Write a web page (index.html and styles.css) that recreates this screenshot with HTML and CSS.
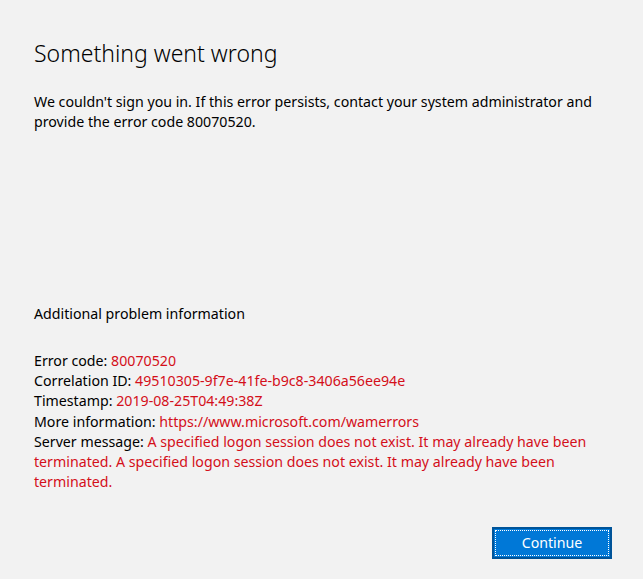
FILE: index.html
```html
<!DOCTYPE html>
<html>
<head>
<meta charset="utf-8">
<link rel="stylesheet" href="styles.css">
</head>
<body>
<div class="page">
  <h1 class="title">Something went wrong</h1>
  <p class="desc">We couldn't sign you in. If this error persists, contact your system administrator and provide the error code 80070520.</p>
  <div class="info">
    <p class="info-head">Additional problem information</p>
    <div class="details">
      <div>Error code: <span class="err">80070520</span></div>
      <div>Correlation ID: <span class="err">49510305-9f7e-41fe-b9c8-3406a56ee94e</span></div>
      <div>Timestamp: <span class="err">2019-08-25T04:49:38Z</span></div>
      <div>More information: <span class="err">https://www.microsoft.com/wamerrors</span></div>
      <div>Server message: <span class="err">A specified logon session does not exist. It may already have been terminated. A specified logon session does not exist. It may already have been terminated.</span></div>
    </div>
  </div>
  <div class="actions">
    <button class="btn"><span class="focus">Continue</span></button>
  </div>
</div>
</body>
</html>
```
FILE: styles.css
```css
html, body {
  margin: 0;
  padding: 0;
  background: #f2f2f2;
}
body {
  font-family: "Noto Sans", "Open Sans", sans-serif;
  color: #000;
  width: 643px;
  height: 579px;
  overflow: hidden;
}
.page {
  box-sizing: border-box;
  height: 579px;
  padding: 36px 31px 0 34px;
  display: flex;
  flex-direction: column;
}
.title {
  margin: 0;
  font-weight: 300;
  font-size: 23px;
  line-height: 34px;
}
.desc {
  margin: 22px 0 0 0;
  font-size: 14.2px;
  line-height: 20px;
}
.info {
  margin-top: 172px;
}
.info-head {
  margin: 0;
  font-size: 14.2px;
  line-height: 20px;
}
.details {
  margin-top: 27px;
  font-size: 14.2px;
  line-height: 20.17px;
}
.err {
  color: #d40f1a;
}
.actions {
  margin-top: auto;
  margin-bottom: 20px;
  display: flex;
  justify-content: flex-end;
}
.btn {
  width: 120px;
  height: 32px;
  padding: 1px;
  background: #0078d7;
  border: 2px solid #005499;
  color: #fff;
  font-family: inherit;
  font-size: 14.2px;
  display: flex;
}
.focus {
  flex: 1;
  border: 1px dotted #fff;
  display: flex;
  align-items: center;
  justify-content: center;
  line-height: 20px;
}
```
